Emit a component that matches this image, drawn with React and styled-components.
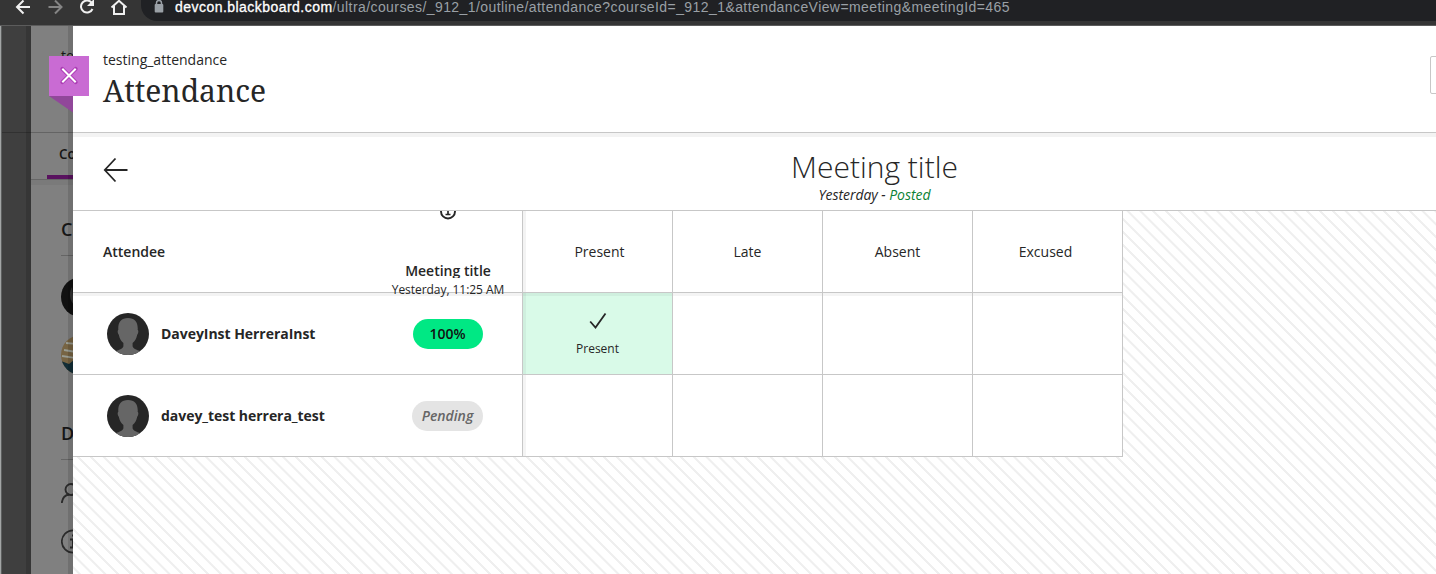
import React from "react";
import styled, { createGlobalStyle, css } from "styled-components";

const Global = createGlobalStyle`
  * { box-sizing: border-box; }
  html, body { margin: 0; padding: 0; overflow: hidden; }
  body { font-family: "Open Sans", sans-serif; color: #262626; font-size: 14px; }
`;

const line = "#c7c7c7";
const band = "#f3f3f3";

const Shell = styled.div`
  width: 1436px;
  height: 574px;
  overflow: hidden;
  display: flex;
  flex-direction: column;
  background: #fff;
`;

const BrowserBar = styled.div`
  flex: none;
  height: 26px;
  background: #353535;
  border-bottom: 1px solid #5c5c5c;
  display: flex;
  align-items: flex-start;
  overflow: hidden;
`;

const BrowserIcons = styled.svg`
  flex: none;
  width: 141px;
  height: 25px;
`;

const AddressBar = styled.div`
  flex: 1;
  height: 21px;
  background: #202124;
  border-bottom-left-radius: 16px;
  display: flex;
  align-items: flex-start;
  padding-left: 12px;
`;

const LockIcon = styled.svg`
  width: 12px;
  height: 14px;
  margin-right: 10px;
`;

const Url = styled.div`
  font: 400 14px/16px "Liberation Sans", sans-serif;
  letter-spacing: ${(p) => p.$spacing};
  color: ${(p) => (p.$host ? "#fff" : "#9aa0a6")};
  -webkit-text-stroke: ${(p) => (p.$host ? "0.3px #fff" : "0")};
  margin-top: -1px;
  white-space: nowrap;
`;

const Stage = styled.div`
  flex: 1;
  display: flex;
  position: relative;
`;

const Edge = styled.div`
  flex: none;
  width: 2px;
  background: linear-gradient(90deg, #a2a5a5 50%, #5c5e5e 50%);
`;

const DarkRail = styled.div`
  flex: none;
  width: 29px;
  background: #3f3f3f;
  border-right: 5px solid #363636;
`;

const Backdrop = styled.div`
  flex: none;
  width: 42px;
  background: #808080;
  position: relative;
  overflow: hidden;
  display: flex;
  flex-direction: column;
  color: #161616;
  &::after {
    content: "";
    position: absolute;
    inset: 0 0 0 auto;
    width: 5px;
    background: rgba(0, 0, 0, 0.12);
  }
`;

const BackHeader = styled.div`
  height: 154px;
  flex: none;
  border-bottom: 1px solid #666;
  display: flex;
  flex-direction: column;
`;

const BackCourse = styled.div`
  height: 106px;
  padding: 20px 0 0 30px;
  font-size: 14px;
  line-height: 20px;
`;

const BackTab = styled.div`
  height: 47px;
  margin-left: 16px;
  padding: 12px 0 0 12px;
  border-bottom: 4px solid #59125f;
  font-weight: 600;
  font-size: 13.5px;
  line-height: 20px;
`;

const BackHeading = styled.div`
  flex: none;
  height: ${(p) => p.$height}px;
  margin-left: 30px;
  padding-top: ${(p) => p.$top}px;
  border-bottom: 1px solid #656565;
  font-size: 18px;
  font-weight: 600;
  line-height: 24px;
`;

const BackBand = styled.div`
  height: 5px;
  background: #7a7a7a;
  flex: none;
`;

const BackAvatar = styled.svg`
  flex: none;
  width: 40px;
  height: 40px;
  margin: ${(p) => p.$top}px 0 0 30px;
`;

const StageRule = styled.div`
  position: absolute;
  left: 2px;
  top: 106px;
  width: 71px;
  height: 1px;
  background: rgba(0, 0, 0, 0.22);
`;

const Ribbon = styled.div`
  position: absolute;
  left: 49px;
  top: 30px;
  width: 40px;
  height: 57px;
`;

const Panel = styled.main`
  flex: none;
  width: 1604px;
  height: 548px;
  display: flex;
  flex-direction: column;
  background: #fff;
`;

const PanelHeader = styled.header`
  flex: none;
  height: 107px;
  border-bottom: 1px solid ${line};
  display: flex;
  justify-content: space-between;
  padding: 24px 30px 0;
`;

const CourseName = styled.div`
  font-size: 14px;
  line-height: 20px;
`;

const PageTitle = styled.h1`
  margin: 2px 0 0;
  font: 400 30px/38px "Noto Serif", "DejaVu Serif Condensed", "DejaVu Serif", serif;
  font-stretch: condensed;
`;

const HeaderButton = styled.div`
  width: 217px;
  height: 38px;
  margin-top: 6px;
  border: 1px solid ${line};
  border-radius: 2px;
`;

const Band = styled.div`
  flex: none;
  height: 4px;
  background: ${band};
`;

const TitleBar = styled.div`
  flex: none;
  height: 74px;
  border-bottom: 1px solid ${line};
  display: grid;
  grid-template-columns: 200px 1fr 200px;
`;

const BackArrow = styled.svg`
  width: 26px;
  height: 26px;
  margin: 20px 0 0 30px;
`;

const MeetingHeading = styled.div`
  text-align: center;
  padding: 11px 1px 0 0;
`;

const MeetingTitle = styled.h2`
  margin: 0;
  font-size: 30px;
  font-weight: 300;
  line-height: 38px;
`;

const MeetingInfo = styled.div`
  font-size: 14px;
  font-style: italic;
  line-height: 18px;
  letter-spacing: -0.05px;
  span { color: #0c8235; }
`;

const Canvas = styled.section`
  flex: 1;
  background: repeating-linear-gradient(
    45deg,
    #fff 0 3.4px,
    #efefef 3.9px 5.5px,
    #fff 6px 9.07px
  );
`;

const Table = styled.div`
  width: 1050px;
  display: grid;
  grid-template-columns: 450px repeat(4, 150px);
  grid-template-rows: repeat(3, 82px);
  background: #fff;
`;

const cell = css`
  border-right: 1px solid ${line};
  border-bottom: 1px solid ${line};
`;

const HeadCell = styled.div`
  ${cell}
  display: flex;
  align-items: center;
  justify-content: center;
  padding-right: ${(p) => (p.$last ? 4 : 0)}px;
  font-size: 14px;
  ${(p) => p.$first && "box-shadow: inset 3px 0 #f3f3f3; padding-left: 4px;"}
`;

const PersonHead = styled.div`
  ${cell}
  display: flex;
  justify-content: space-between;
  align-items: center;
  padding-left: 30px;
  font-weight: 600;
`;

const MeetingHead = styled.div`
  width: 148px;
  height: 81px;
  display: flex;
  flex-direction: column;
  align-items: center;
`;

const InfoIcon = styled.svg`
  width: 18px;
  height: 9px;
  flex: none;
`;

const MeetingName = styled.div`
  flex: none;
  margin-top: 41px;
  height: 17px;
  overflow: hidden;
  font-size: 14px;
  font-weight: 600;
  line-height: 20px;
`;

const MeetingTime = styled.div`
  flex: none;
  position: relative;
  z-index: 1;
  margin-top: 3px;
  font-size: 12px;
  font-weight: 400;
  line-height: 18px;
  letter-spacing: -0.05px;
  white-space: nowrap;
`;

const PersonCell = styled.div`
  ${cell}
  display: flex;
  align-items: center;
  padding-left: 34px;
  ${(p) => p.$top && "box-shadow: inset 0 3px #f3f3f3;"}
`;

const Avatar = styled.svg`
  width: 42px;
  height: 42px;
  flex: none;
`;

const PersonName = styled.div`
  flex: 1;
  margin-left: 12px;
  font-weight: 700;
  font-size: 14px;
  letter-spacing: -0.04px;
`;

const PillSlot = styled.div`
  width: 149px;
  display: flex;
  justify-content: center;
`;

const Pill = styled.div`
  height: 30px;
  width: ${(p) => (p.$pending ? 71 : 70)}px;
  border-radius: 15px;
  display: flex;
  align-items: center;
  justify-content: center;
  font-size: 14px;
  font-weight: 600;
  background: ${(p) => (p.$pending ? "#e4e4e4" : "#00e884")};
  color: ${(p) => (p.$pending ? "#666" : "#111")};
  font-style: ${(p) => (p.$pending ? "italic" : "normal")};
`;

const MarkCell = styled.div`
  ${cell}
  display: flex;
  flex-direction: column;
  align-items: center;
  padding-right: 4px;
  font-size: 12px;
  line-height: 16px;
  background: ${(p) => (p.$marked ? "#d9fae8" : "#fff")};
  box-shadow: ${(p) =>
    [p.$first && "inset 3px 0 rgba(0,0,0,.045)", p.$top && "inset 0 3px rgba(0,0,0,.045)"]
      .filter(Boolean)
      .join(", ") || "none"};
`;

const Check = styled.svg`
  width: 18px;
  height: 18px;
  margin: 19px 0 11px 4px;
`;

const MarkLabel = styled.span`
  margin-left: 4px;
`;

function Silhouette() {
  return (
    <Avatar viewBox="0 0 42 42">
      <defs>
        <clipPath id="face"><circle cx="21" cy="21" r="21" /></clipPath>
      </defs>
      <circle cx="21" cy="21" r="21" fill="#262626" />
      <path
        clipPath="url(#face)"
        fill="#666"
        d="M21 5c-7 0-10.200 4.500-9.700 12-.9 0-.9 3.200.5 4.800.8 4 2.400 6.300 4.600 8.200v3c0 2.500-3.400 3.300-8.400 5.700L6 43h30l-2-4.300c-5-2.400-8.400-3.200-8.400-5.700v-3c2.200-1.900 3.800-4.200 4.600-8.200 1.400-1.600 1.400-4.800.5-4.800C31.200 9.500 28 5 21 5z"
      />
    </Avatar>
  );
}

const people = [
  { name: "DaveyInst HerreraInst", score: "100%", status: "Present" },
  { name: "davey_test herrera_test", score: "Pending", status: null },
];
const statuses = ["Present", "Late", "Absent", "Excused"];

export default function App() {
  return (
    <Shell>
      <Global />
      <BrowserBar>
        <BrowserIcons viewBox="0 0 141 25" fill="none" strokeWidth="2">
          <path stroke="#f1f1f1" d="M30 7H17.500M23.500 .5L17 7l6.500 6.500" />
          <path stroke="#858585" d="M48.500 7H61M55 .5L61.500 7 55 13.500" />
          <path stroke="#f1f1f1" d="M92.500 9A6 6 0 1 1 91.700 2.800" />
          <path fill="#f1f1f1" d="M94-1v7h-7z" />
          <path stroke="#f1f1f1" d="M111.500 7.500L119 .8l7.500 6.700M114 6v8h10V6" />
        </BrowserIcons>
        <AddressBar>
          <LockIcon viewBox="0 0 12 14">
            <path d="M3.500 6V3a2.500 2.500 0 0 1 5 0v3" fill="none" stroke="#9aa0a6" strokeWidth="1.500" />
            <rect x="1.700" y="4" width="8.600" height="8.500" rx="1" fill="#9aa0a6" />
          </LockIcon>
          <Url $host $spacing="0.46px">devcon.blackboard.com</Url>
          <Url $spacing="0.42px">/ultra/courses/_912_1/outline/attendance?courseId=_912_1&amp;attendanceView=meeting&amp;meetingId=465</Url>
        </AddressBar>
      </BrowserBar>
      <Stage>
        <Edge />
        <DarkRail />
        <Backdrop>
          <BackHeader>
            <BackCourse>testing</BackCourse>
            <BackTab>Content</BackTab>
          </BackHeader>
          <BackBand />
          <BackHeading $height={71} $top={32}>Course</BackHeading>
          <BackAvatar viewBox="0 0 40 40" $top={21}>
            <circle cx="20" cy="20" r="20" fill="#111" />
            <path d="M11 10c-3 5-3 12 2 18z" fill="#333" />
          </BackAvatar>
          <BackAvatar viewBox="0 0 40 40" $top={18}>
            <defs><clipPath id="photo"><circle cx="20" cy="20" r="20" /></clipPath></defs>
            <g clipPath="url(#photo)">
              <path fill="#776443" d="M0 0h40v40H0z" />
              <path d="M5 8l10 1M3 15l12 2M1 21l14 2" stroke="#999c92" strokeWidth="1.800" />
              <path fill="#132e37" d="M0 26l8 3 5-4v15H0z" />
            </g>
          </BackAvatar>
          <BackHeading $height={85} $top={46}>Details</BackHeading>
          <BackAvatar viewBox="0 0 40 40" $top={14} fill="none" stroke="#2b2b2b" strokeWidth="1.900">
            <circle cx="10" cy="15.500" r="5.500" />
            <path d="M.8 29c.5-5 3.500-8 7.500-8.500" />
          </BackAvatar>
          <BackAvatar viewBox="0 0 40 40" $top={9} fill="none" stroke="#2b2b2b" strokeWidth="1.700">
            <circle cx="12" cy="18.500" r="11.200" />
            <path d="M9 16.500h3v8M9 24.500h6M11 12.500h2" strokeWidth="2" />
          </BackAvatar>
        </Backdrop>
        <Panel>
          <PanelHeader>
            <div>
              <CourseName>testing_attendance</CourseName>
              <PageTitle>Attendance</PageTitle>
            </div>
            <HeaderButton />
          </PanelHeader>
          <Band />
          <TitleBar>
            <BackArrow viewBox="0 0 26 26" fill="none" stroke="#262626" strokeWidth="1.800">
              <path d="M24.500 13H2M12.500 1.500L1.800 13l10.700 11.500" />
            </BackArrow>
            <MeetingHeading>
              <MeetingTitle>Meeting title</MeetingTitle>
              <MeetingInfo>Yesterday - <span>Posted</span></MeetingInfo>
            </MeetingHeading>
          </TitleBar>
          <Canvas>
            <Table>
              <PersonHead>
                Attendee
                <MeetingHead>
                  <InfoIcon viewBox="0 9 18 9" fill="none" stroke="#262626">
                    <circle cx="9" cy="9.500" r="7" strokeWidth="1.900" />
                    <path d="M9 7v5.500M6.500 12.500h5" strokeWidth="1.700" />
                  </InfoIcon>
                  <MeetingName>Meeting title</MeetingName>
                  <MeetingTime>Yesterday, 11:25 AM</MeetingTime>
                </MeetingHead>
              </PersonHead>
              {statuses.map((s, i) => (
                <HeadCell key={s} $first={i === 0} $last={i === 3}>{s}</HeadCell>
              ))}
              {people.map((p, row) => (
                <React.Fragment key={p.name}>
                  <PersonCell $top={row === 0}>
                    <Silhouette />
                    <PersonName>{p.name}</PersonName>
                    <PillSlot><Pill $pending={!p.status}>{p.score}</Pill></PillSlot>
                  </PersonCell>
                  {statuses.map((s, i) => (
                    <MarkCell key={s} $first={i === 0} $top={row === 0} $marked={p.status === s}>
                      {p.status === s && (
                        <>
                          <Check viewBox="0 0 18 18" fill="none" stroke="#262626" strokeWidth="1.800">
                            <path d="M1.200 9.500l5.300 6L16.500 1.500" />
                          </Check>
                          <MarkLabel>{s}</MarkLabel>
                        </>
                      )}
                    </MarkCell>
                  ))}
                </React.Fragment>
              ))}
            </Table>
          </Canvas>
        </Panel>
        <StageRule />
        <Ribbon>
          <svg width="40" height="57" viewBox="0 0 40 57">
            <path d="M0 40h24v16.500z" fill="#91479a" />
            <path d="M0 0h40v40H0z" fill="#c96bd3" />
            <path d="M13.300 12.800l13.400 13.400M26.700 12.800L13.300 26.200" stroke="#9c27a5" strokeOpacity=".65" strokeWidth="4" strokeLinecap="round" />
            <path d="M13.300 12.800l13.400 13.400M26.700 12.800L13.300 26.200" stroke="#fff" strokeWidth="2" />
          </svg>
        </Ribbon>
      </Stage>
    </Shell>
  );
}
